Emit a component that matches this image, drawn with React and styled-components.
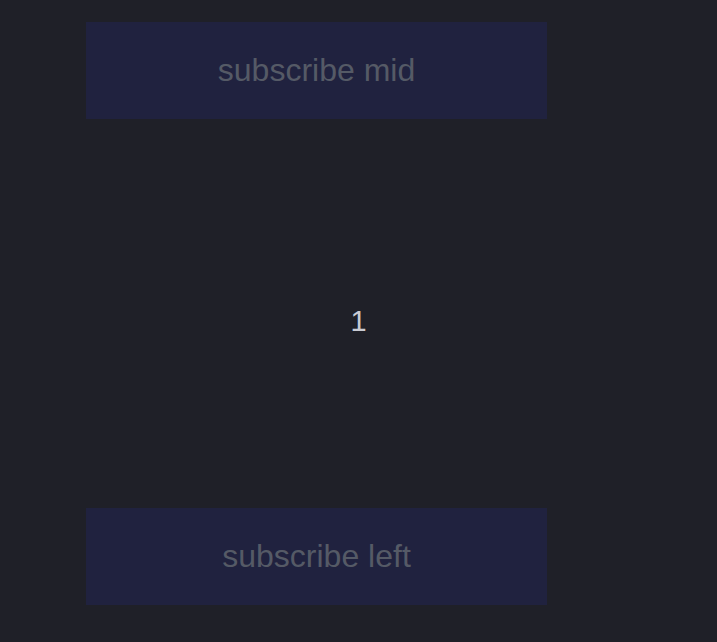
import styled, { createGlobalStyle } from "styled-components";

const GlobalStyle = createGlobalStyle`
  html, body {
    margin: 0;
    padding: 0;
    background: #1f2028;
    font-family: "Liberation Sans", Arial, sans-serif;
  }
`;

const Page = styled.div`
  height: 642px;
  display: grid;
  grid-template-rows: auto 1fr auto;
  box-sizing: border-box;
  padding: 22px 0 37px;
`;

const SubscribeButton = styled.button`
  margin-left: 86px;
  width: 461px;
  height: 97px;
  border: none;
  padding: 0;
  background: #20223f;
  color: #555a66;
  font-family: inherit;
  font-size: 32px;
  cursor: pointer;
`;

const Counter = styled.div`
  display: flex;
  align-items: center;
  justify-content: center;
  padding-top: 16px;
  color: #c9cbd3;
  font-size: 29px;
`;

const App = () => {
  return (
    <>
      <GlobalStyle />
      <Page>
        <SubscribeButton>subscribe mid</SubscribeButton>
        <Counter>1</Counter>
        <SubscribeButton>subscribe left</SubscribeButton>
      </Page>
    </>
  );
};

export default App;
